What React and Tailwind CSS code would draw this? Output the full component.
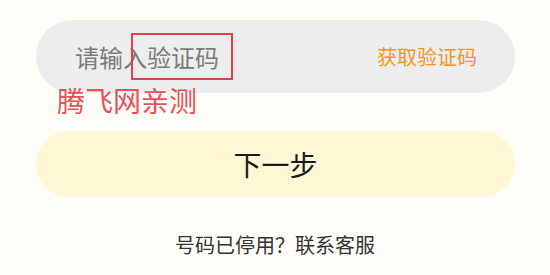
export default function App() {
  return (
    <div
      className="relative w-[550px] h-[275px] overflow-hidden bg-[#fffdf8] px-9 pt-5"
      style={{ fontFamily: '"Noto Sans CJK SC", "Noto Sans", sans-serif' }}
    >
      {/* Code input */}
      <div className="relative flex h-[73px] w-[479px] items-center justify-between rounded-full bg-[#ededed] pl-[39px] pr-[38px]">
        <span className="text-[24px] text-[#7b7b7b]">请输入验证码</span>
        <span className="text-[20px] text-[#f39522]">获取验证码</span>
        {/* Annotation box */}
        <div className="absolute left-[95px] top-[13px] h-[47px] w-[102px] border-2 border-[#e5404a]" />
      </div>

      {/* Annotation text */}
      <div className="absolute left-[57px] top-[84px] text-[28px] leading-none text-[#e8505a]">
        <span className="block pt-[2px]">腾飞网亲测</span>
      </div>

      {/* Next button */}
      <button className="mt-[38px] flex h-[66px] w-[479px] items-center justify-center rounded-full bg-[#fff7d6] text-[28px] text-[#1a1a1a]">
        下一步
      </button>

      <div className="mt-[38px] text-center text-[20px] leading-none text-[#333]">
        号码已停用？联系客服
      </div>
    </div>
  );
}
